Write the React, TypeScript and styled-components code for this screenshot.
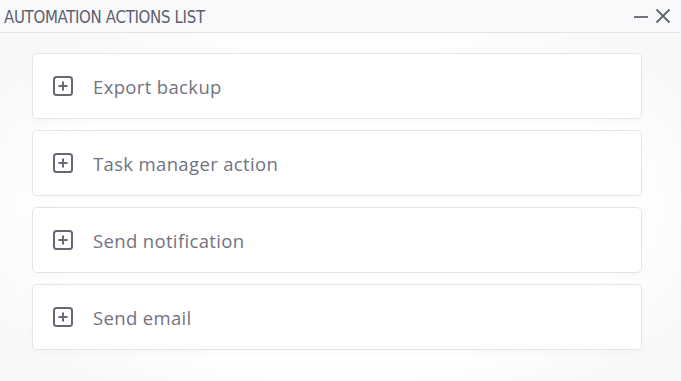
import { createGlobalStyle, styled } from "styled-components";

const GlobalStyle = createGlobalStyle`
  html, body {
    margin: 0;
    padding: 0;
    background: #ffffff;
  }
  #root {
    width: 682px;
    height: 381px;
  }
`;

const Panel = styled.div`
  width: 682px;
  height: 381px;
  box-sizing: border-box;
  border-right: 1px solid #d6d8dc;
  background: #ffffff;
  display: flex;
  flex-direction: column;
  overflow: hidden;
`;

const Header = styled.div`
  height: 33px;
  flex: 0 0 auto;
  box-sizing: border-box;
  background: #f8f9fa;
  border-bottom: 1px solid #e3e5e8;
  display: flex;
  align-items: center;
  justify-content: space-between;
  padding: 0 10px 0 4px;
`;

const Title = styled.h1`
  margin: 0;
  font-family: "DejaVu Sans Condensed", "DejaVu Sans", sans-serif;
  font-stretch: condensed;
  font-weight: 400;
  font-size: 18.5px;
  letter-spacing: -0.35px;
  color: #5d5f6e;
  padding-top: 1px;
  transform: scaleX(0.9);
  transform-origin: left center;
  white-space: nowrap;
`;

const Controls = styled.div`
  display: flex;
  align-items: center;
  gap: 6px;
  color: #62646f;
`;

const ControlBtn = styled.button`
  border: 0;
  padding: 0;
  background: none;
  color: inherit;
  width: 16px;
  height: 16px;
  display: flex;
  align-items: center;
  justify-content: center;
  cursor: pointer;
`;

const Body = styled.div`
  flex: 1;
  background: radial-gradient(
    ellipse 60% 65% at 50% 50%,
    #ffffff 70%,
    #f7f8f8 100%
  );
  padding: 20px 39px 0 32px;
  display: flex;
  flex-direction: column;
  gap: 11px;
`;

const Card = styled.div`
  height: 66px;
  box-sizing: border-box;
  background: #ffffff;
  border: 1px solid #e4e5e7;
  border-radius: 5px;
  box-shadow: 0 3px 8px rgba(0, 0, 0, 0.025);
  display: flex;
  align-items: center;
  padding-left: 20px;
  gap: 20px;
  cursor: pointer;
`;

const Label = styled.span`
  font-family: "Open Sans", "Noto Sans", sans-serif;
  font-size: 18.5px;
  color: #72737f;
  letter-spacing: 0.35px;
`;

const PlusSquare = () => (
  <svg width="20" height="20" viewBox="0 0 20 20" fill="none">
    <rect x="1" y="1" width="18" height="18" rx="2.5" stroke="#666875" strokeWidth="2" />
    <path d="M10 5.5v9M5.5 10h9" stroke="#666875" strokeWidth="2" />
  </svg>
);

const actions = [
  "Export backup",
  "Task manager action",
  "Send notification",
  "Send email",
];

function App() {
  return (
    <>
      <GlobalStyle />
      <Panel>
        <Header>
          <Title>AUTOMATION ACTIONS LIST</Title>
          <Controls>
            <ControlBtn aria-label="minimize">
              <svg width="16" height="16" viewBox="0 0 16 16">
                <path d="M1 9h14" stroke="currentColor" strokeWidth="1.8" />
              </svg>
            </ControlBtn>
            <ControlBtn aria-label="close">
              <svg width="16" height="16" viewBox="0 0 16 16">
                <path d="M1.5 1.5l13 13M14.5 1.5l-13 13" stroke="currentColor" strokeWidth="1.8" />
              </svg>
            </ControlBtn>
          </Controls>
        </Header>
        <Body>
          {actions.map((a) => (
            <Card key={a}>
              <PlusSquare />
              <Label>{a}</Label>
            </Card>
          ))}
        </Body>
      </Panel>
    </>
  );
}

export default App;
